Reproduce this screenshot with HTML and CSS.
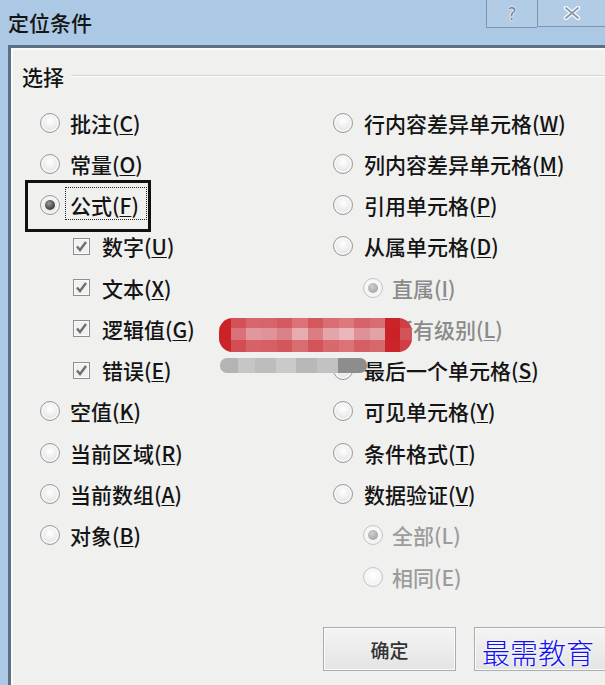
FILE: index.html
```html
<!DOCTYPE html>
<html lang="zh-CN">
<head>
<meta charset="utf-8">
<title>定位条件</title>
<link rel="stylesheet" href="styles.css">
</head>
<body>
<div class="titlebar">
  <div class="title">定位条件</div>
  <div class="tb-buttons">
    <div class="tb-btn help">?</div>
    <div class="tb-btn close">
      <svg width="18" height="14" viewBox="0 0 18 14"><path d="M3 2 L15 12 M15 2 L3 12" stroke="#f4f7fb" stroke-width="4.5" stroke-linecap="round"/><path d="M3 2 L15 12 M15 2 L3 12" stroke="#8a9bb0" stroke-width="1.8" stroke-linecap="round"/></svg>
    </div>
  </div>
</div>
<div class="frame">
  <div class="client">
    <div class="group-head"><span class="group-label">选择</span><span class="group-line"></span></div>
    <div class="columns">
      <div class="col left">
        <div class="row"><span class="radio"></span><span class="lbl">批注(<u>C</u>)</span></div>
        <div class="row"><span class="radio"></span><span class="lbl">常量(<u>O</u>)</span></div>
        <div class="row hl"><span class="radio on"></span><span class="lbl focus">公式(<u>F</u>)</span><span class="hl-box"></span></div>
        <div class="row sub"><span class="check"><svg width="13" height="13" viewBox="0 0 13 13"><path d="M2 6.5 L5 10 L11 2" fill="none" stroke="#6f6f6f" stroke-width="2.4"/></svg></span><span class="lbl">数字(<u>U</u>)</span></div>
        <div class="row sub"><span class="check"><svg width="13" height="13" viewBox="0 0 13 13"><path d="M2 6.5 L5 10 L11 2" fill="none" stroke="#6f6f6f" stroke-width="2.4"/></svg></span><span class="lbl">文本(<u>X</u>)</span></div>
        <div class="row sub"><span class="check"><svg width="13" height="13" viewBox="0 0 13 13"><path d="M2 6.5 L5 10 L11 2" fill="none" stroke="#6f6f6f" stroke-width="2.4"/></svg></span><span class="lbl">逻辑值(<u>G</u>)</span></div>
        <div class="row sub"><span class="check"><svg width="13" height="13" viewBox="0 0 13 13"><path d="M2 6.5 L5 10 L11 2" fill="none" stroke="#6f6f6f" stroke-width="2.4"/></svg></span><span class="lbl">错误(<u>E</u>)</span></div>
        <div class="row"><span class="radio"></span><span class="lbl">空值(<u>K</u>)</span></div>
        <div class="row"><span class="radio"></span><span class="lbl">当前区域(<u>R</u>)</span></div>
        <div class="row"><span class="radio"></span><span class="lbl">当前数组(<u>A</u>)</span></div>
        <div class="row"><span class="radio"></span><span class="lbl">对象(<u>B</u>)</span></div>
      </div>
      <div class="col right">
        <div class="row"><span class="radio"></span><span class="lbl">行内容差异单元格(<u>W</u>)</span></div>
        <div class="row"><span class="radio"></span><span class="lbl">列内容差异单元格(<u>M</u>)</span></div>
        <div class="row"><span class="radio"></span><span class="lbl">引用单元格(<u>P</u>)</span></div>
        <div class="row"><span class="radio"></span><span class="lbl">从属单元格(<u>D</u>)</span></div>
        <div class="row sub dis"><span class="radio on dis"></span><span class="lbl">直属(<u>I</u>)</span></div>
        <div class="row sub dis"><span class="radio dis"></span><span class="lbl">所有级别(<u>L</u>)</span></div>
        <div class="row"><span class="radio"></span><span class="lbl">最后一个单元格(<u>S</u>)</span></div>
        <div class="row"><span class="radio"></span><span class="lbl">可见单元格(<u>Y</u>)</span></div>
        <div class="row"><span class="radio"></span><span class="lbl">条件格式(<u>T</u>)</span></div>
        <div class="row"><span class="radio"></span><span class="lbl">数据验证(<u>V</u>)</span></div>
        <div class="row sub dis light"><span class="radio on dis"></span><span class="lbl">全部(L)</span></div>
        <div class="row sub dis light"><span class="radio dis"></span><span class="lbl">相同(E)</span></div>
      </div>
    </div>
    <div class="buttons">
      <div class="btn">确定</div>
      <div class="btn"></div>
    </div>
  </div>
</div>
<div class="blur-red"></div>
<div class="blur-gray"></div>
<div class="watermark">最需教育</div>
</body>
</html>
```

FILE: styles.css
```css
html, body {
  margin: 0;
  padding: 0;
}
body {
  width: 605px;
  height: 685px;
  overflow: hidden;
  position: relative;
  background: #f0f0f0;
  font-family: "Noto Sans CJK SC", "Noto Sans", sans-serif;
  font-weight: 500;
  color: #141414;
}
.titlebar {
  height: 45px;
  background: #abc8e4;
  display: flex;
  justify-content: space-between;
  align-items: flex-start;
}
.title {
  font-size: 21px;
  line-height: 26px;
  padding: 9px 0 0 8px;
  color: #151515;
}
.tb-buttons {
  display: flex;
  margin-right: -23px;
}
.tb-btn {
  height: 27px;
  border: 1px solid #7d94ad;
  border-top: none;
  background: #b3cce6;
  display: flex;
  align-items: center;
  justify-content: center;
}
.tb-btn.help {
  width: 50px;
  border-right: none;
  color: #76859a;
  font-size: 17px;
  font-family: "DejaVu Sans", sans-serif;
  text-shadow: 0 0 2px #fff, 0 0 1px #fff, 0 0 1px #fff;
}
.tb-btn.close {
  width: 91px;
  padding-right: 21px;
  box-sizing: border-box;
}
.frame {
  border-left: 8px solid #abc8e4;
}
.client {
  border-left: 3px solid #5d6f83;
  border-top: 3px solid #5d6f83;
  height: 637px;
  overflow: hidden;
  box-shadow: inset 2px 2px 0 #fafafa;
  background: #f0f0ef;
}
.group-head {
  display: flex;
  align-items: center;
  padding: 16px 0 0 11px;
  height: 24px;
}
.group-label {
  font-size: 21px;
  line-height: 24px;
}
.group-line {
  flex: 1;
  height: 1px;
  background: #d5d5d5;
  border-bottom: 1px solid #fff;
  margin-left: 7px;
}
.columns {
  display: grid;
  grid-template-columns: 322px 1fr;
  margin-top: 14px;
}
.col {
  display: flex;
  flex-direction: column;
}
.row {
  height: 41.27px;
  display: flex;
  align-items: center;
  position: relative;
  white-space: nowrap;
}
.left .row { padding-left: 29px; }
.left .row.sub { padding-left: 62px; }
.right .row { padding-left: 0; }
.right .row.sub { padding-left: 30px; }
.lbl {
  font-size: 21px;
  line-height: 24px;
  margin-left: 10px;
  position: relative;
}
.right .row .lbl { margin-left: 11px; }
.right .row.sub .lbl { margin-left: 9px; }
.left .row.sub .lbl { margin-left: 12px; }
u {
  text-decoration-thickness: 1px;
  text-underline-offset: 2px;
}
.row.dis .lbl { color: #8a8a8a; }
.row.dis.light .lbl { color: #9c9c9c; }
.radio {
  width: 18px;
  height: 18px;
  flex: none;
  border-radius: 50%;
  border: 1px solid #9a9a9a;
  background: radial-gradient(circle at 50% 40%, #ffffff 0, #f0f0f0 40%, #d2d2d2 100%);
  box-shadow: inset 0 0 0 2px #f6f6f6;
  position: relative;
}
.radio.on::after {
  content: "";
  position: absolute;
  left: 4px;
  top: 4px;
  width: 10px;
  height: 10px;
  border-radius: 50%;
  background: radial-gradient(circle at 40% 35%, #9a9a9a 0, #4a4a4a 60%, #2e2e2e 100%);
}
.radio.dis {
  border-color: #c4c4c4;
  background: radial-gradient(circle at 50% 40%, #ffffff 0, #f5f5f5 50%, #e6e6e6 100%);
}
.radio.on.dis::after {
  background: radial-gradient(circle at 40% 35%, #d0d0d0 0, #a8a8a8 70%, #9a9a9a 100%);
}
.check {
  width: 15px;
  height: 15px;
  flex: none;
  border: 1px solid #8f8f8f;
  box-shadow: inset 0 0 0 1px #fbfbfb;
  background: #f1f1f1;
  display: flex;
  align-items: center;
  justify-content: center;
}
.focus::before {
  content: "";
  position: absolute;
  left: -5px;
  right: -8px;
  top: -6px;
  bottom: -3px;
  border: 1px dotted #222;
}
.hl-box {
  position: absolute;
  left: 14px;
  top: -5px;
  width: 120px;
  height: 46px;
  border: 3px solid #111;
}
.buttons {
  display: flex;
  gap: 18px;
  padding-left: 312px;
  margin-top: 30px;
}
.btn {
  width: 131px;
  height: 42px;
  flex: none;
  border: 1px solid #adadad;
  background: linear-gradient(#f4f4f4, #e4e4e4);
  box-shadow: inset 0 0 0 1px #fafafa;
  display: flex;
  align-items: center;
  justify-content: center;
  font-size: 19px;
  color: #333;
}
.blur-red {
  position: absolute;
  left: 219px;
  top: 318px;
  width: 193px;
  height: 34px;
  border-radius: 14px;
  background:
    linear-gradient(90deg,
      #c8161c 0 6%, #d96a70 6% 14%, #e09298 14% 22%, #de8d93 22% 30%,
      #d87b81 30% 38%, #e6a8ac 38% 46%, #d8777d 46% 54%, #e2a0a4 54% 62%,
      #eab3b6 62% 70%, #dc8c91 70% 78%, #e09ea1 78% 86%, #c8161c 86% 94%, #d04a50 94% 100%);
}
.blur-red::after {
  content: "";
  position: absolute;
  inset: 0;
  border-radius: 14px;
  background: linear-gradient(180deg, rgba(205,50,56,0.45) 0 30%, rgba(255,255,255,0.05) 30% 65%, rgba(205,50,56,0.5) 65% 100%);
}
.blur-gray {
  position: absolute;
  left: 220px;
  top: 358px;
  width: 147px;
  height: 15px;
  border-radius: 7px;
  background: linear-gradient(90deg,
    #b4b4b4 0 12%, #c6c6c6 12% 24%, #bdbdbd 24% 38%, #cacaca 38% 52%,
    #b8b8b8 52% 66%, #c2c2c2 66% 80%, #8d8d8d 80% 100%);
}
.watermark {
  position: absolute;
  left: 482px;
  top: 632px;
  font-size: 28px;
  line-height: 40px;
  font-weight: 300;
  color: #1010f0;
  font-family: "Noto Sans CJK SC", sans-serif;
  text-shadow: 0 0 2px #fff, 0 0 3px #fff;
}
```
